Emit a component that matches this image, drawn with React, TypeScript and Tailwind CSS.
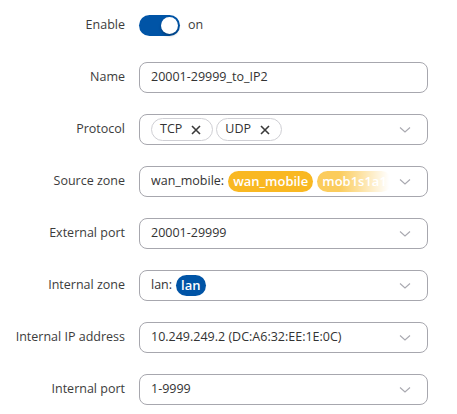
import React from "react";

function Chevron() {
  return (
    <svg width="12" height="8" viewBox="0 0 12 8" className="shrink-0" fill="none">
      <path d="M1 1.5 L6 6 L11 1.5" stroke="#a9a9b0" strokeWidth="1.1" />
    </svg>
  );
}

function XIcon() {
  return (
    <svg width="10" height="10" viewBox="0 0 10 10" fill="none">
      <path d="M1 1 L9 9 M9 1 L1 9" stroke="#3a3a3a" strokeWidth="1.6" />
    </svg>
  );
}

function Row({ label, children }: { label: string; children: React.ReactNode }) {
  return (
    <div className="flex items-center h-[31px]">
      <div className="w-[125px] text-right text-[12.5px] text-[#3c3c3c] shrink-0">{label}</div>
      <div className="ml-[14px] flex-1">{children}</div>
    </div>
  );
}

function Box({ children, chevron = true }: { children: React.ReactNode; chevron?: boolean }) {
  return (
    <div className="w-[289px] h-[31px] border border-[#a7a7ae] rounded-[8px] flex items-center pl-[11px] pr-[16px] bg-white overflow-hidden">
      <div className="flex-1 flex items-center min-w-0 text-[12.5px] text-[#333]">{children}</div>
      {chevron && <Chevron />}
    </div>
  );
}

export default function App() {
  return (
    <div
      className="w-[457px] h-[414px] bg-white pt-[9px] flex flex-col gap-[21px]"
      style={{ fontFamily: '"Open Sans", "Noto Sans", sans-serif' }}
    >
      <div className="flex items-center h-[32px]">
        <div className="w-[125px] text-right text-[12.5px] text-[#3c3c3c] shrink-0">Enable</div>
        <div className="ml-[14px] flex items-center">
          <div className="w-[41px] h-[21px] rounded-full bg-[#0054a6] flex items-center justify-end pr-[2px]">
            <div className="w-[17px] h-[17px] rounded-full bg-white shadow-[0_2px_3px_rgba(0,0,0,0.25)]" />
          </div>
          <span className="ml-[8px] text-[12.5px] text-[#3c3c3c]">on</span>
        </div>
      </div>

      <Row label="Name">
        <Box chevron={false}>20001-29999_to_IP2</Box>
      </Row>

      <Row label="Protocol">
        <div className="w-[289px] h-[31px] border border-[#a7a7ae] rounded-[8px] flex items-center pl-[11px] pr-[16px] bg-white">
          <div className="flex-1 flex items-center gap-[3px] text-[12.5px] text-[#333]">
            <span className="h-[23px] border border-[#cfcfd4] rounded-full flex items-center pl-[8px] pr-[11px] gap-[9px]">
              TCP <XIcon />
            </span>
            <span className="h-[23px] border border-[#cfcfd4] rounded-full flex items-center pl-[8px] pr-[11px] gap-[9px]">
              UDP <XIcon />
            </span>
          </div>
          <Chevron />
        </div>
      </Row>

      <Row label="Source zone">
        <div className="w-[289px] h-[31px] border border-[#a7a7ae] rounded-[8px] flex items-center pl-[11px] pr-[16px] bg-white overflow-hidden">
          <div className="flex-1 flex items-center gap-[4px] text-[12.5px] text-[#333] overflow-hidden relative">
            <span className="shrink-0 font-medium">wan_mobile:</span>
            <span className="shrink-0 h-[21px] rounded-full bg-[#f9b822] text-white font-semibold text-[13px] px-[5px] flex items-center">wan_mobile</span>
            <span className="shrink-0 h-[21px] rounded-full bg-[#fbcc5c] text-white font-semibold text-[13px] px-[5px] flex items-center">mob1s1a1</span>
            <div className="absolute right-0 top-0 h-full w-[50px] bg-gradient-to-r from-white/0 to-white" />
          </div>
          <div className="ml-[10px]"><Chevron /></div>
        </div>
      </Row>

      <Row label="External port">
        <Box>20001-29999</Box>
      </Row>

      <Row label="Internal zone">
        <Box>
          <span className="font-medium">lan:</span>
          <span className="ml-[4px] h-[21px] rounded-full bg-[#0054a6] text-white font-semibold text-[13px] px-[5px] flex items-center">lan</span>
        </Box>
      </Row>

      <Row label="Internal IP address">
        <Box>10.249.249.2 (DC:A6:32:EE:1E:0C)</Box>
      </Row>

      <Row label="Internal port">
        <Box>1-9999</Box>
      </Row>
    </div>
  );
}
